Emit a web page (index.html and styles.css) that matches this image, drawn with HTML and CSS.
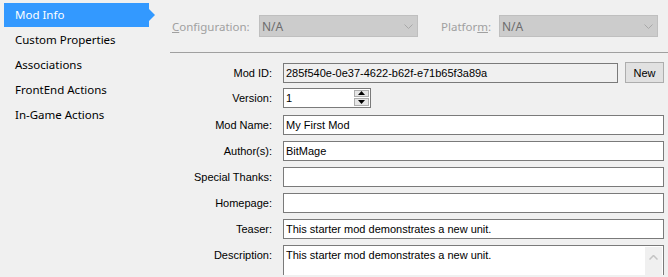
FILE: index.html
```html
<!DOCTYPE html>
<html lang="en">
<head>
  <meta charset="UTF-8" />
  <meta name="viewport" content="width=device-width, initial-scale=1.0"/>
  <title>Mod Info</title>
  <link rel="stylesheet" href="styles.css">
</head>
<body>
  <div class="app">
    <nav class="sidebar">
      <div class="nav-item active">Mod Info</div>
      <div class="nav-item">Custom Properties</div>
      <div class="nav-item">Associations</div>
      <div class="nav-item">FrontEnd Actions</div>
      <div class="nav-item">In-Game Actions</div>
    </nav>

    <main class="content">
      <div class="toolbar">
        <span class="tb-label tb-config"><u>C</u>onfiguration:</span>
        <div class="combo">
          <span>N/A</span>
          <svg class="chev" width="9" height="5" viewBox="0 0 9 5"><polyline points="0.5,0.5 4.5,4.5 8.5,0.5" fill="none" stroke="#a8a8a8" stroke-width="1"/></svg>
        </div>
        <span class="tb-label tb-platform">Platfor<u>m</u>:</span>
        <div class="combo">
          <span>N/A</span>
          <svg class="chev" width="9" height="5" viewBox="0 0 9 5"><polyline points="0.5,0.5 4.5,4.5 8.5,0.5" fill="none" stroke="#a8a8a8" stroke-width="1"/></svg>
        </div>
      </div>

      <div class="form">
        <div class="row">
          <label class="lbl">Mod ID:</label>
          <input class="field readonly" type="text" value="285f540e-0e37-4622-b62f-e71b65f3a89a" readonly>
          <button class="btn">New</button>
        </div>
        <div class="row row-version">
          <label class="lbl">Version:</label>
          <div class="spin">
            <input class="spin-input" type="text" value="1">
            <div class="spin-btns">
              <div class="spin-btn"><svg width="7" height="4" viewBox="0 0 7 4"><polygon points="0,4 7,4 3.5,0" fill="#000"/></svg></div>
              <div class="spin-btn"><svg width="7" height="4" viewBox="0 0 7 4"><polygon points="0,0 7,0 3.5,4" fill="#000"/></svg></div>
            </div>
          </div>
        </div>
        <div class="row">
          <label class="lbl">Mod Name:</label>
          <input class="field" type="text" value="My First Mod">
        </div>
        <div class="row">
          <label class="lbl">Author(s):</label>
          <input class="field" type="text" value="BitMage">
        </div>
        <div class="row">
          <label class="lbl">Special Thanks:</label>
          <input class="field" type="text" value="">
        </div>
        <div class="row">
          <label class="lbl">Homepage:</label>
          <input class="field" type="text" value="">
        </div>
        <div class="row row-teaser">
          <label class="lbl">Teaser:</label>
          <input class="field" type="text" value="This starter mod demonstrates a new unit.">
        </div>
        <div class="row row-top">
          <label class="lbl">Description:</label>
          <div class="memo">
            <div class="memo-text">This starter mod demonstrates a new unit.</div>
            <div class="scrollbar">
              <svg width="9" height="5" viewBox="0 0 9 5"><polyline points="0.5,4.5 4.5,0.5 8.5,4.5" fill="none" stroke="#c4c4c4" stroke-width="1.5"/></svg>
            </div>
          </div>
        </div>
      </div>
    </main>
  </div>
</body>
</html>
```

FILE: styles.css
```css
body {
  margin: 0;
  background: #f0f0f0;
  color: #000;
  overflow: hidden;
}
.app {
  display: flex;
  height: 277px;
  overflow: hidden;
}

/* left navigation */
.sidebar {
  width: 170px;
  flex-shrink: 0;
  padding: 3px 0 0 4px;
  box-sizing: border-box;
  font-family: "Noto Sans", sans-serif;
  font-size: 11.5px;
}
.nav-item {
  position: relative;
  width: 145px;
  height: 24px;
  line-height: 24px;
  margin-bottom: 1px;
  padding-left: 11px;
  box-sizing: border-box;
  white-space: nowrap;
}
.nav-item.active {
  background: #3399ff;
  color: #fff;
}
.nav-item.active::after {
  content: "";
  position: absolute;
  right: -6px;
  top: 6px;
  border-left: 6px solid #3399ff;
  border-top: 6px solid transparent;
  border-bottom: 6px solid transparent;
}

/* right side */
.content {
  flex: 1;
  min-width: 0;
}
.toolbar {
  display: flex;
  align-items: center;
  padding: 15px 0 15px 2px;
  border-bottom: 1px solid #a0a0a0;
  font-family: "Noto Sans", sans-serif;
  font-size: 11.5px;
}
.tb-label {
  color: #a0a0a0;
}
.tb-config {
  width: 87px;
}
.tb-platform {
  width: 58px;
  margin-left: 23px;
}
.combo {
  width: 159px;
  height: 22px;
  box-sizing: border-box;
  background: #cccccc;
  border: 1px solid #bfbfbf;
  color: #6d6d6d;
  display: flex;
  align-items: center;
  justify-content: space-between;
  padding: 0 4px 0 2px;
  font-size: 12px;
}

.form {
  padding: 9px 4px 0 0;
  font-family: "Liberation Sans", Arial, sans-serif;
  font-size: 11px;
}
.row {
  display: flex;
  align-items: center;
  height: 21px;
  margin-bottom: 5px;
}
.row-version {
  margin-top: -1px;
  margin-bottom: 6px;
}
.row-teaser {
  margin-top: 1px;
  margin-bottom: 6px;
}
.row-top {
  align-items: flex-start;
  height: auto;
}
.row-top .lbl {
  padding-top: 4px;
}
.lbl {
  width: 102px;
  margin-right: 11px;
  text-align: right;
  flex-shrink: 0;
  color: #000;
}
.field {
  flex: 1;
  min-width: 0;
  height: 20px;
  box-sizing: border-box;
  border: 1px solid #7a7a7a;
  background: #fff;
  padding: 0 2px;
  font-family: "Liberation Sans", Arial, sans-serif;
  font-size: 11px;
  color: #000;
  outline: none;
  margin: 0;
}
.field.readonly {
  background: #f0f0f0;
}
.btn {
  width: 39px;
  height: 21px;
  margin-left: 7px;
  padding: 0;
  background: #e1e1e1;
  border: 1px solid #adadad;
  font-family: "Liberation Sans", Arial, sans-serif;
  font-size: 11px;
  color: #000;
}

.spin {
  width: 88px;
  height: 20px;
  box-sizing: border-box;
  border: 1px solid #7a7a7a;
  background: #fff;
  display: flex;
}
.spin-input {
  flex: 1;
  min-width: 0;
  border: none;
  padding: 0 2px;
  font-family: "Liberation Sans", Arial, sans-serif;
  font-size: 11px;
  outline: none;
  background: transparent;
}
.spin-btns {
  width: 15px;
  display: flex;
  flex-direction: column;
  padding: 1px 1px 1px 0;
  gap: 1px;
}
.spin-btn {
  flex: 1;
  background: #e6e6e6;
  border: 1px solid #adadad;
  display: flex;
  align-items: center;
  justify-content: center;
}

.memo {
  flex: 1;
  height: 30px;
  box-sizing: border-box;
  border: 1px solid #7a7a7a;
  border-bottom: none;
  background: #fff;
  display: flex;
}
.memo-text {
  flex: 1;
  padding: 3px 2px;
}
.scrollbar {
  width: 17px;
  margin: 1px 1px 0 1px;
  background: #f0f0f0;
  display: flex;
  justify-content: center;
  padding-top: 8px;
  box-sizing: border-box;
}
```
